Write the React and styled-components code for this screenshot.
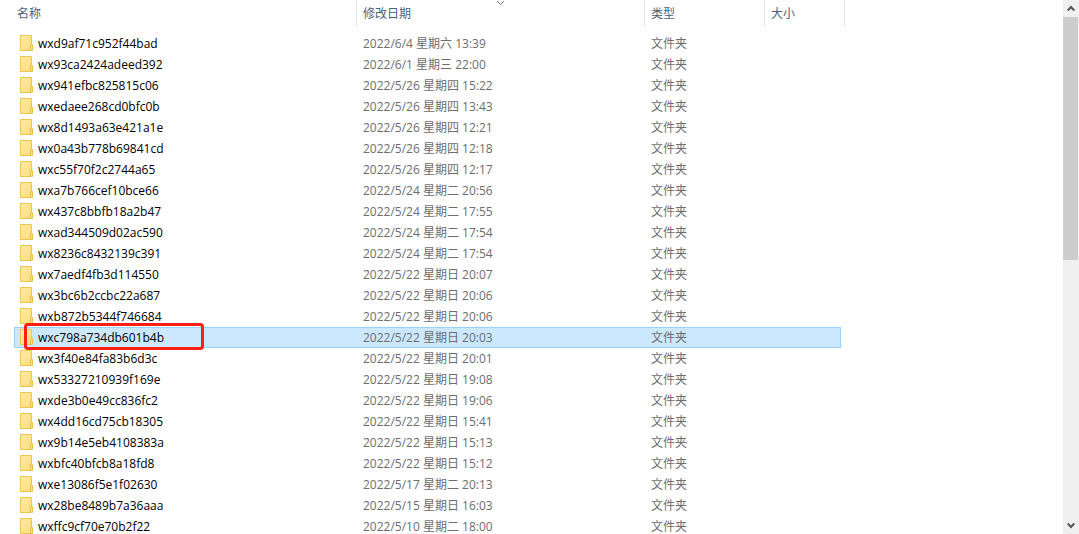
import React, { useState } from 'react'
import styled, { createGlobalStyle } from 'styled-components'

const GlobalStyle = createGlobalStyle`
* {
box-sizing: border-box;
}
body {
margin: 0;
background-color: #fff;
font-family: "Open Sans", "Noto Sans CJK SC", sans-serif;
font-size: 12px;
}
`

const Container = styled.div`
display: flex;
height: 100vh;
overflow: hidden;
`

const List = styled.main`
flex: 1;
min-width: 0;
overflow: hidden;
padding: 0 222px 0 14px;
`

const Table = styled.table`
width: 100%;
table-layout: fixed;
border-collapse: separate;
border-spacing: 0;
`

const Col = styled.col`
width: ${props => props.$width};
`

const HeadCell = styled.th`
position: relative;
height: 27px;
padding: 0 0 0 ${props => props.$first ? "3px" : "6px"};
text-align: left;
font-weight: 400;

&::after {
content: "";
position: absolute;
top: 0;
right: ${props => props.$last ? "-4px" : "0"};
width: 1px;
height: 27px;
background-color: #e5e5e5;
}
`

const HeadButton = styled.button`
display: block;
width: 100%;
height: 27px;
padding: 0;
border: none;
background: none;
font: inherit;
line-height: 27px;
text-align: left;
color: #4c607a;
`

const SortMark = styled.svg`
position: absolute;
top: 0;
left: 50%;
margin-left: -5px;
`

const Body = styled.tbody`
&::before {
content: "";
display: block;
height: 6px;
}
`

const Row = styled.tr`
background-color: ${props => props.$selected ? "#cce8ff" : "transparent"};
outline: ${props => props.$selected ? "1px solid #99d1ff" : "none"};
outline-offset: -1px;
`

const Cell = styled.td`
height: 21px;
padding: 0 0 0 6px;
line-height: 21px;
white-space: nowrap;
color: #6d6d6d;
`

const NameCell = styled(Cell)`
position: relative;
color: #000;
`

const Name = styled.div`
display: flex;
align-items: center;
gap: 5px;
height: 21px;
`

const Highlight = styled.span`
position: absolute;
top: -4px;
left: 10px;
width: 180px;
height: 27px;
border: 3px solid #ff1f12;
border-radius: 4px;
pointer-events: none;
`

const ScrollBar = styled.div`
display: flex;
flex-direction: column;
width: 16px;
background-color: #f0f0f0;
`

const ScrollButton = styled.button`
display: flex;
align-items: center;
justify-content: center;
width: 16px;
height: 17px;
padding: 0;
border: none;
background: none;
`

const Track = styled.div`
flex: 1;
`

const Thumb = styled.div`
width: 15px;
height: 243px;
max-height: 100%;
background-color: #cdcdcd;
`

const Folder = styled.svg`
margin-bottom: 1px;
`

const FolderIcon = () => (
    <Folder width="13" height="16" viewBox="0 0 13 16" aria-hidden="true">
        <defs>
            <linearGradient id="folder" x1="0" y1="0" x2="1" y2="1">
                <stop offset="0" stopColor="#ffeba6" />
                <stop offset="1" stopColor="#fddd7c" />
            </linearGradient>
        </defs>
        <path d="M.5 .5h11v15H.5z" fill="url(#folder)" stroke="#ebc74b" />
        <path d="M10.5 9.5h2v6h-2z" fill="#fbe08a" stroke="#e8c147" />
    </Folder>
)

const Arrow = ({ down }) => (
    <svg width="8" height="7" viewBox="0 0 8 7" aria-hidden="true">
        <path
            d={down ? "M.7 1.5 4 5 7.3 1.5" : "M.7 5.5 4 2 7.3 5.5"}
            fill="none"
            stroke="#555"
            strokeWidth="2"
        />
    </svg>
)

const folders = [
    { name: "wxd9af71c952f44bad", date: "2022/6/4 星期六 13:39" },
    { name: "wx93ca2424adeed392", date: "2022/6/1 星期三 22:00" },
    { name: "wx941efbc825815c06", date: "2022/5/26 星期四 15:22" },
    { name: "wxedaee268cd0bfc0b", date: "2022/5/26 星期四 13:43" },
    { name: "wx8d1493a63e421a1e", date: "2022/5/26 星期四 12:21" },
    { name: "wx0a43b778b69841cd", date: "2022/5/26 星期四 12:18" },
    { name: "wxc55f70f2c2744a65", date: "2022/5/26 星期四 12:17" },
    { name: "wxa7b766cef10bce66", date: "2022/5/24 星期二 20:56" },
    { name: "wx437c8bbfb18a2b47", date: "2022/5/24 星期二 17:55" },
    { name: "wxad344509d02ac590", date: "2022/5/24 星期二 17:54" },
    { name: "wx8236c8432139c391", date: "2022/5/24 星期二 17:54" },
    { name: "wx7aedf4fb3d114550", date: "2022/5/22 星期日 20:07" },
    { name: "wx3bc6b2ccbc22a687", date: "2022/5/22 星期日 20:06" },
    { name: "wxb872b5344f746684", date: "2022/5/22 星期日 20:06" },
    { name: "wxc798a734db601b4b", date: "2022/5/22 星期日 20:03" },
    { name: "wx3f40e84fa83b6d3c", date: "2022/5/22 星期日 20:01" },
    { name: "wx53327210939f169e", date: "2022/5/22 星期日 19:08" },
    { name: "wxde3b0e49cc836fc2", date: "2022/5/22 星期日 19:06" },
    { name: "wx4dd16cd75cb18305", date: "2022/5/22 星期日 15:41" },
    { name: "wx9b14e5eb4108383a", date: "2022/5/22 星期日 15:13" },
    { name: "wxbfc40bfcb8a18fd8", date: "2022/5/22 星期日 15:12" },
    { name: "wxe13086f5e1f02630", date: "2022/5/17 星期二 20:13" },
    { name: "wx28be8489b7a36aaa", date: "2022/5/15 星期日 16:03" },
    { name: "wxffc9cf70e70b2f22", date: "2022/5/10 星期二 18:00" },
]

const marked = "wxc798a734db601b4b"

const App = () => {
    const [selected, setSelected] = useState(marked)

    return (
        <Container>
            <GlobalStyle />
            <List>
                <Table>
                    <colgroup>
                        <Col $width="auto" />
                        <Col $width="288px" />
                        <Col $width="120px" />
                        <Col $width="76px" />
                    </colgroup>
                    <thead>
                        <tr>
                            <HeadCell $first><HeadButton>名称</HeadButton></HeadCell>
                            <HeadCell aria-sort="descending">
                                <HeadButton>修改日期</HeadButton>
                                <SortMark width="9" height="6" viewBox="0 0 9 6" aria-hidden="true">
                                    <path d="M1 1 4.5 4.5 8 1" fill="none" stroke="#777" />
                                </SortMark>
                            </HeadCell>
                            <HeadCell><HeadButton>类型</HeadButton></HeadCell>
                            <HeadCell $last><HeadButton>大小</HeadButton></HeadCell>
                        </tr>
                    </thead>
                    <Body>
                        {folders.map(folder =>
                            <Row
                                key={folder.name}
                                $selected={folder.name === selected}
                                onClick={() => setSelected(folder.name)}
                            >
                                <NameCell>
                                    <Name>
                                        <FolderIcon />
                                        {folder.name}
                                    </Name>
                                    {folder.name === marked && <Highlight />}
                                </NameCell>
                                <Cell>{folder.date}</Cell>
                                <Cell>文件夹</Cell>
                                <Cell />
                            </Row>
                        )}
                    </Body>
                </Table>
            </List>
            <ScrollBar>
                <ScrollButton aria-label="向上滚动"><Arrow /></ScrollButton>
                <Track><Thumb /></Track>
                <ScrollButton aria-label="向下滚动"><Arrow down /></ScrollButton>
            </ScrollBar>
        </Container>
    )
}

export default App
